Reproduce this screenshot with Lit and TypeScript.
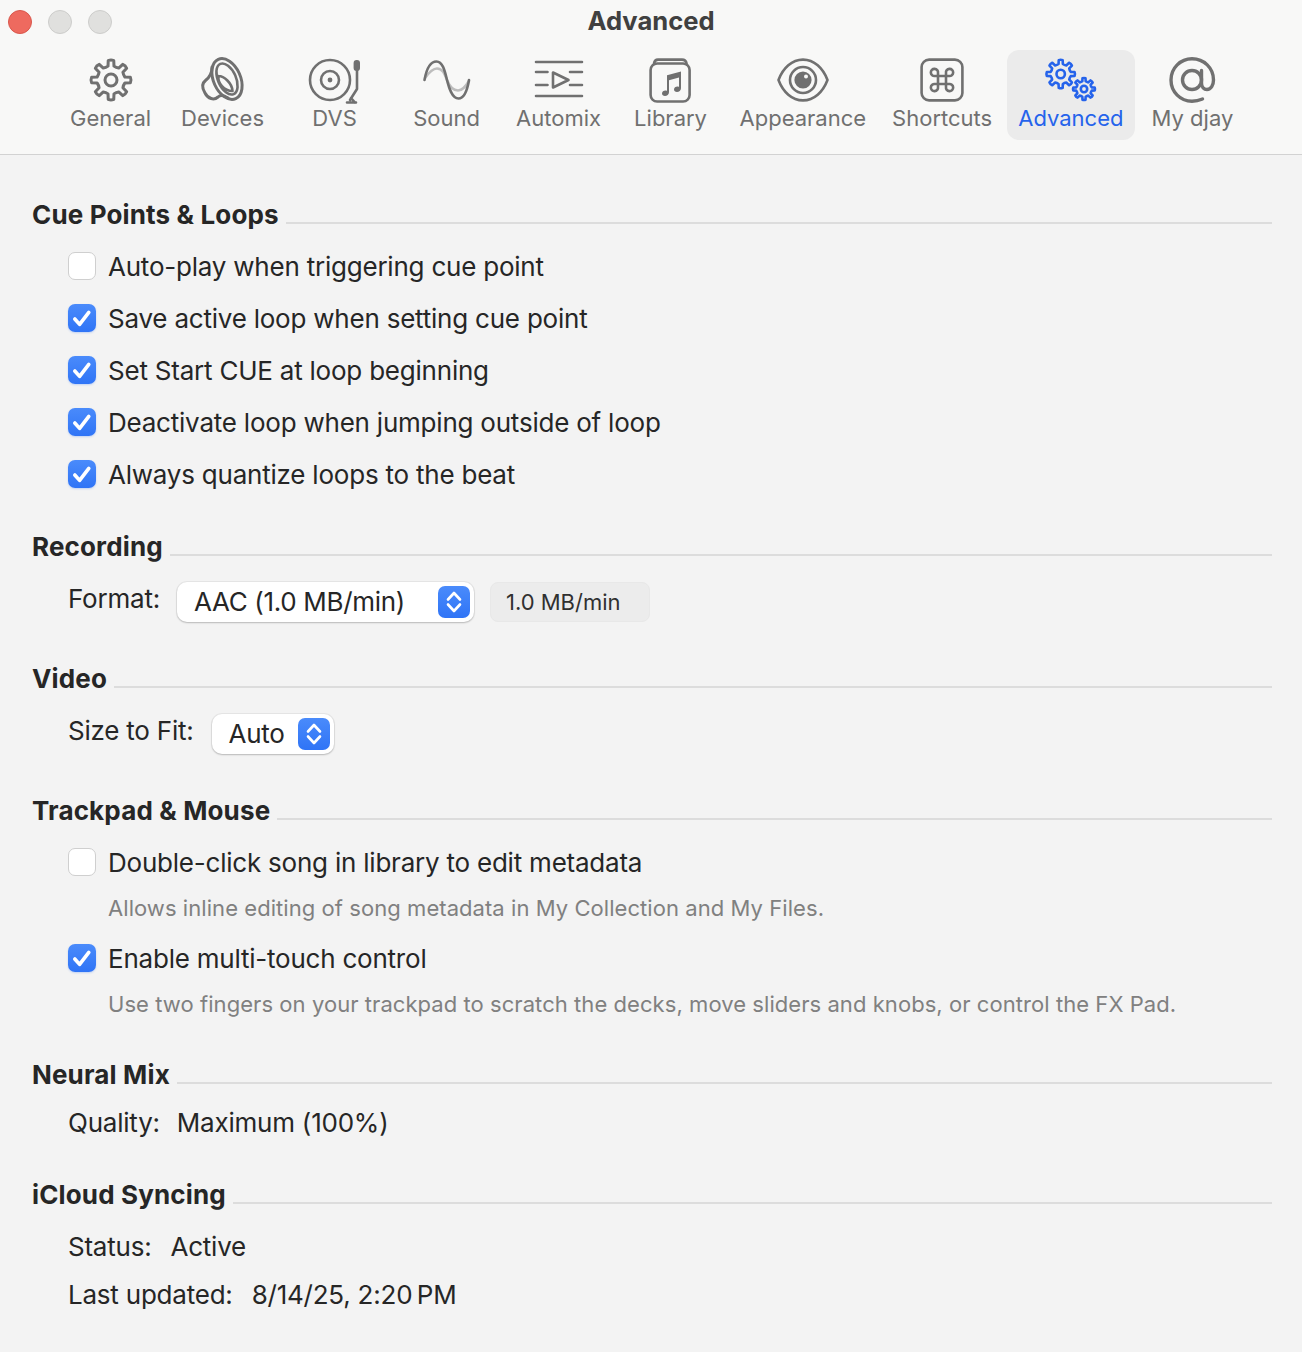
import { LitElement, html, css, svg } from "lit";
import { customElement } from "lit/decorators.js";

function gear(cx: number, cy: number, ro: number, ri: number, teeth: number, rot = 0): string {
  const pts: string[] = [];
  const step = (Math.PI * 2) / teeth;
  const p = (r: number, a: number) =>
    `${(cx + r * Math.cos(a)).toFixed(2)} ${(cy + r * Math.sin(a)).toFixed(2)}`;
  for (let i = 0; i < teeth; i++) {
    const a = i * step + rot;
    const w = step * 0.18;
    const wb = step * 0.27;
    const startA = a - wb;
    if (i === 0) pts.push(`M${p(ri, startA)}`);
    pts.push(`L${p(ro, a - w)}`);
    pts.push(`Q${p(ro * 1.05, a)} ${p(ro, a + w)}`);
    pts.push(`L${p(ri, a + wb)}`);
    pts.push(`Q${p(ri * 0.94, a + step / 2)} ${p(ri, a + step - wb)}`);
  }
  return pts.join(" ") + "Z";
}

const icons: Record<string, unknown> = {
  general: svg`<path class="mid" d=${gear(24, 24, 19.6, 14.2, 8, Math.PI / 2)}/><circle class="mid" cx="24" cy="24" r="6"/>`,
  devices: svg`
    <ellipse class="mid" cx="28" cy="23" rx="13.5" ry="21.5" transform="rotate(-24 28 23)"/>
    <ellipse cx="28" cy="23" rx="9" ry="16.5" transform="rotate(-24 28 23)"/>
    <path d="M19.5 20C25 20 33 27 33.5 35M19.5 20C18.5 27 25 35 33.5 35"/>
    <path class="mid" d="M13 11C13 17 11 21 6.5 24.5C2.5 27.5 3 32 6 37C9 43 15 44.5 19 41C21 39 24 38.5 29 42"/>`,
  dvs: svg`
    <circle cx="19" cy="24" r="20"/><circle cx="19" cy="24" r="9"/>
    <circle cx="19" cy="24" r="2.4" class="fill"/>
    <rect x="42.6" y="4" width="6.4" height="11" rx="3" class="fill"/>
    <path d="M46 14V33L39 44M36 46.5H45M40 42L44 46.5"/>`,
  sound: svg`
    <path class="soft" d="M2 22C7 15 10 12.5 14 12.5 C20 12.5 22 19 24 24 C26 29 29 34.5 35 34.5 C40 34.5 43 30 46 25"/>
    <path d="M1.5 24C4 10 9 5.5 13.5 5.5C20 5.5 22 16 24 24C26 32 29 42.5 35.5 42.5C41 42.5 44 36 46 24"/>`,
  automix: svg`
    <path d="M1 6H47M1 40H47M1 16H12.5M1 29H12.5M35 16H47M35 29H47"/>
    <path d="M18 16.5V31.5L33.5 24Z"/>`,
  library: svg`
    <rect x="3.6" y="7.5" width="39" height="38" rx="6.5"/>
    <path d="M7 7.5C7.5 4.5 9 3.6 11 3.6H35C37.5 3.6 39 4.5 39.6 7.5"/>
    <path class="fill nostroke" d="M20 19.3L34 15.6V32.2C34 34.6 32 36 30 36C28.2 36 27 35 27 33.5C27 31.8 28.5 30.6 30.5 30.6C31 30.6 31.5 30.7 32 30.9V21.6L22 24.2V36.2C22 38.6 20 40 18 40C16.2 40 15 39 15 37.5C15 35.8 16.5 34.6 18.5 34.6C19 34.6 19.5 34.7 20 34.9Z"/>`,
  appearance: svg`
    <path d="M-0.5 24C4 12 13 3.6 24 3.6C35 3.6 44 12 48.5 24C44 36 35 44.4 24 44.4C13 44.4 4 36 -0.5 24Z"/>
    <circle cx="24" cy="24" r="13"/>
    <circle cx="24" cy="24" r="8.6" class="fill nostroke"/>
    <circle cx="27" cy="20.5" r="2" class="hl"/>`,
  shortcuts: svg`
    <rect x="3.6" y="3.6" width="40.8" height="40.8" rx="7.5"/>
    <path transform="translate(24 24)" d="M-4 -4H4V4H-4ZM-4 -4V-7A3.6 3.6 0 1 0 -7 -4H-4ZM4 -4V-7A3.6 3.6 0 1 1 7 -4H4ZM-4 4V7A3.6 3.6 0 1 1 -7 4H-4ZM4 4V7A3.6 3.6 0 1 0 7 4H4Z"/>`,
  advanced: svg`
    <path d=${gear(13.7, 18, 14, 10.2, 8, Math.PI / 2)}/><circle cx="13.7" cy="18" r="4.2"/>
    <path d=${gear(37, 33, 10.8, 7.9, 8, Math.PI / 2)}/><circle cx="37" cy="33" r="3.2"/>`,
  at: svg`<path class="heavy" d="M33.5 14.5V27C33.5 31 36 33.5 39 33.5C43 33.5 45.5 29 45.5 24C45.5 12 36 2.8 24 2.8C12.5 2.8 3 12 3 24C3 36 12.5 45.2 24 45.2C28 45.2 31 44.5 34.5 43"/><circle class="heavy" cx="24" cy="24" r="9.5"/>`,
};

interface Tab { id: string; label: string; active?: boolean }
const tabs: Tab[] = [
  { id: "general", label: "General" },
  { id: "devices", label: "Devices" },
  { id: "dvs", label: "DVS" },
  { id: "sound", label: "Sound" },
  { id: "automix", label: "Automix" },
  { id: "library", label: "Library" },
  { id: "appearance", label: "Appearance" },
  { id: "shortcuts", label: "Shortcuts" },
  { id: "advanced", label: "Advanced", active: true },
  { id: "at", label: "My djay" },
];

const stepper = html`<span class="stepper"><svg viewBox="0 0 32 32" width="32" height="32"><path d="M10 13.5L16 7L22 13.5M10 18.5L16 25L22 18.5"/></svg></span>`;

@customElement("app-root")
export class AppRoot extends LitElement {
  static styles = css`
    :host {
      display: block;
      width: 1302px;
      height: 1352px;
      overflow: hidden;
      background: #f3f3f3;
      color: #262626;
      font-family: Inter, "Liberation Sans", sans-serif;
      font-size: 26px;
      line-height: 36px;
      letter-spacing: -0.22px;
    }
    .toolbar { background: #f8f8f7; border-bottom: 1px solid #d2d2d2; height: 154px; box-sizing: content-box; }
    .titlebar { display: grid; grid-template-columns: 1fr auto 1fr; align-items: center; height: 42px; }
    .lights { display: flex; gap: 16px; padding-left: 8px; padding-top: 2px; }
    .light { width: 24px; height: 24px; border-radius: 50%; box-sizing: border-box; background: #e0e0de; border: 1px solid #cdcdcb; }
    .light.close { background: #ee6a5f; border-color: #d9574c; }
    .title { font-weight: 700; color: #404040; font-size: 25.6px; letter-spacing: 0; }
    .tabs { display: flex; justify-content: center; gap: 3px; padding-top: 8px; padding-left: 1px; }
    .tab { min-width: 109px; height: 90px; padding: 6px 11.5px 0; box-sizing: border-box; border-radius: 12px; display: flex; flex-direction: column; align-items: center; color: #707070; }
    .tab.active { background: #ebebeb; color: #2563eb; }
    .tab svg { width: 48px; height: 48px; flex: none; overflow: visible; fill: none; stroke: currentColor; stroke-width: 2.6; stroke-linecap: round; stroke-linejoin: round; }
    .tab svg .fill { fill: currentColor; stroke: none; }
    .tab svg .nostroke { stroke: none; }
    .tab svg .soft { stroke: #bdbdbd; }
    .tab svg .hl { fill: #f8f8f7; stroke: none; }
    .tab svg .mid { stroke-width: 3; }
    .tab svg .heavy { stroke-width: 3.4; }
    .tab-label { font-size: 22px; line-height: 30px; margin-top: -1px; white-space: nowrap; letter-spacing: 0; }
    main { padding: 42px 30px 0 32px; }
    section { margin-bottom: 28px; }
    .head { display: flex; gap: 7px; height: 36px; }
    .head h2 { margin: 0; font-size: 26px; font-weight: 700; line-height: 36px; color: #262626; letter-spacing: 0.15px; white-space: nowrap; }
    .rule { flex: 1; height: 2px; margin-top: 25px; background: #dcdcdc; }
    .body { margin-top: 8px; padding-left: 36px; }
    .check { height: 52px; display: flex; align-items: center; gap: 12px; }
    .box { width: 28px; height: 28px; box-sizing: border-box; border-radius: 7px; background: #fff; border: 1px solid #cfcfcf; flex: none; margin-bottom: 2px; }
    .box.on { background: linear-gradient(#4a8bfb, #2f74f6); border: none; box-shadow: 0 1px 2px rgba(47,116,246,.25); }
    .box svg { display: block; width: 28px; height: 28px; fill: none; stroke: #fff; stroke-width: 3.6; stroke-linecap: round; stroke-linejoin: round; }
    .desc { height: 44px; padding: 0 0 6px 40px; box-sizing: border-box; font-size: 22px; line-height: 38px; color: #808080; letter-spacing: 0.06px; white-space: nowrap; }
    .form { display: flex; height: 60px; padding-top: 8px; box-sizing: border-box; gap: 17px; }
    .form.wide { gap: 18px; }
    .control { margin-top: 1px; height: 40px; box-sizing: border-box; background: #fff; border-radius: 10px; box-shadow: 0 0 0 1px rgba(0,0,0,.05), 0 1px 2px rgba(0,0,0,.2); display: flex; align-items: center; justify-content: space-between; padding: 0 4px 0 17px; letter-spacing: -0.32px; }
    .control.format { width: 297px; }
    .control.size { width: 122px; }
    .stepper { width: 32px; height: 32px; border-radius: 7px; background: linear-gradient(#4a8bfb, #2f74f6); flex: none; }
    .stepper svg { display: block; fill: none; stroke: #fff; stroke-width: 2.6; stroke-linecap: round; stroke-linejoin: round; }
    .readout { margin: 1px 0 0 -1px; width: 160px; height: 40px; box-sizing: border-box; background: #ececec; border: 1px solid #e8e8e8; border-radius: 8px; padding-left: 15px; font-size: 22px; line-height: 38px; color: #303030; letter-spacing: 0; }
    .info { display: flex; flex-direction: column; gap: 12px; padding-bottom: 8px; }
    .info.one { padding-top: 4px; }
    .info.two { padding-top: 8px; padding-bottom: 0; }
    .kv { display: flex; gap: 17px; white-space: nowrap; }
    .two .kv { gap: 19px; }
  `;

  private check(label: string, on: boolean) {
    return html`<div class="check">
      <span class="box ${on ? "on" : ""}">${on
        ? html`<svg viewBox="0 0 28 28"><path d="M6.8 15L11.6 20.4L20.8 8.4"/></svg>`
        : null}</span>
      <span>${label}</span>
    </div>`;
  }

  private head(t: string) {
    return html`<div class="head"><h2>${t}</h2><div class="rule"></div></div>`;
  }

  render() {
    return html`
      <header class="toolbar">
        <div class="titlebar">
          <div class="lights"><span class="light close"></span><span class="light"></span><span class="light"></span></div>
          <div class="title">Advanced</div>
          <div></div>
        </div>
        <nav class="tabs">
          ${tabs.map(
            (t) => html`<div class="tab ${t.active ? "active" : ""}">
              <svg viewBox="0 0 48 48">${icons[t.id]}</svg>
              <span class="tab-label">${t.label}</span>
            </div>`
          )}
        </nav>
      </header>
      <main>
        <section>
          ${this.head("Cue Points & Loops")}
          <div class="body">
            ${this.check("Auto-play when triggering cue point", false)}
            ${this.check("Save active loop when setting cue point", true)}
            ${this.check("Set Start CUE at loop beginning", true)}
            ${this.check("Deactivate loop when jumping outside of loop", true)}
            ${this.check("Always quantize loops to the beat", true)}
          </div>
        </section>
        <section>
          ${this.head("Recording")}
          <div class="body form">
            <span>Format:</span>
            <div class="control format"><span>AAC (1.0 MB/min)</span>${stepper}</div>
            <div class="readout">1.0 MB/min</div>
          </div>
        </section>
        <section>
          ${this.head("Video")}
          <div class="body form wide">
            <span>Size to Fit:</span>
            <div class="control size"><span>Auto</span>${stepper}</div>
          </div>
        </section>
        <section>
          ${this.head("Trackpad & Mouse")}
          <div class="body">
            ${this.check("Double-click song in library to edit metadata", false)}
            <div class="desc">Allows inline editing of song metadata in My Collection and My Files.</div>
            ${this.check("Enable multi-touch control", true)}
            <div class="desc">Use two fingers on your trackpad to scratch the decks, move sliders and knobs, or control the FX Pad.</div>
          </div>
        </section>
        <section>
          ${this.head("Neural Mix")}
          <div class="body info one">
            <div class="kv"><span>Quality:</span><span>Maximum (100%)</span></div>
          </div>
        </section>
        <section>
          ${this.head("iCloud Syncing")}
          <div class="body info two">
            <div class="kv"><span>Status:</span><span>Active</span></div>
            <div class="kv"><span>Last updated:</span><span>8/14/25, 2:20\u202FPM</span></div>
          </div>
        </section>
      </main>
    `;
  }
}
